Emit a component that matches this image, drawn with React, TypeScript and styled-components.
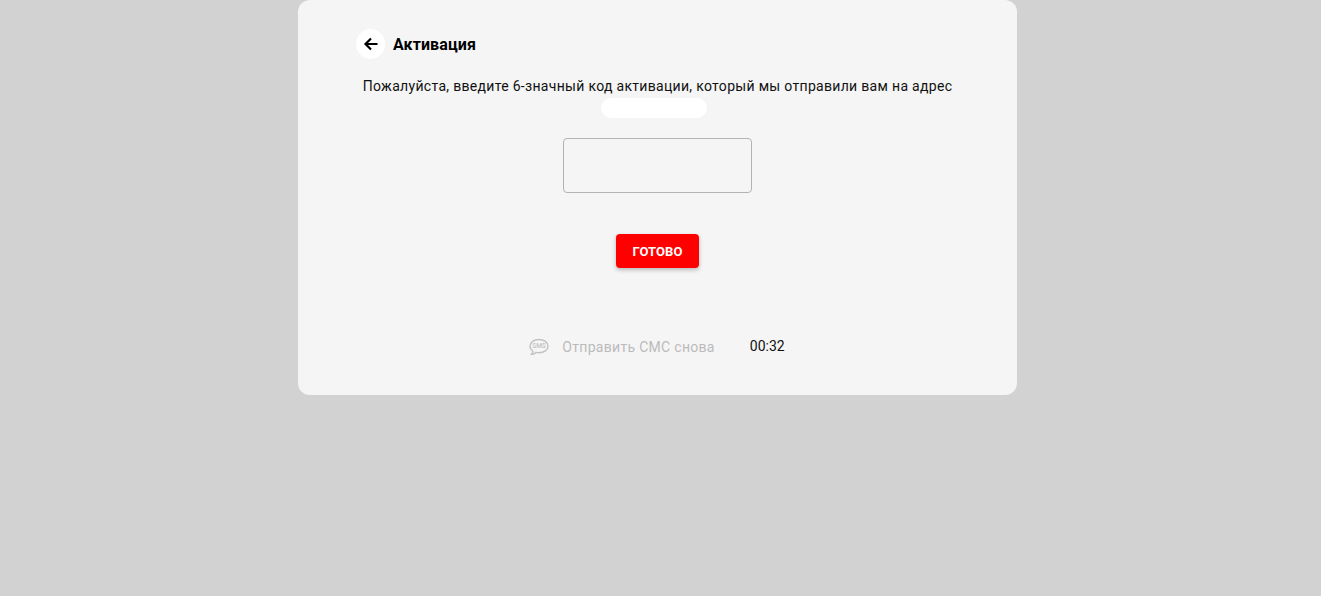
import { createGlobalStyle } from 'styled-components'
import styled from 'styled-components'

const GlobalStyle = createGlobalStyle`
  html, body {
    margin: 0;
    height: 100%;
    background: #d2d2d2;
    font-family: Roboto, "Liberation Sans", sans-serif;
  }
`

const Page = styled.div`
  display: flex;
  justify-content: center;
  min-height: 596px;
  padding-right: 6px;
  box-sizing: border-box;
`

const Card = styled.main`
  width: 719px;
  height: 395px;
  box-sizing: border-box;
  padding: 29px 58px 0;
  display: flex;
  flex-direction: column;
  align-items: center;
  background: #f5f5f5;
  border-radius: 12px;
`

const Header = styled.div`
  align-self: stretch;
  display: flex;
  align-items: center;
  gap: 8px;
  height: 30px;
`

const BackButton = styled.button`
  width: 29px;
  height: 30px;
  padding: 0;
  border: none;
  border-radius: 50%;
  background: #ffffff;
  display: flex;
  align-items: center;
  justify-content: center;
`

const Title = styled.h1`
  margin: 0;
  font-size: 16px;
  font-weight: 700;
  letter-spacing: 0.1px;
  color: #000;
`

const Message = styled.p`
  margin: 18px 0 0;
  height: 18px;
  line-height: 18px;
  font-size: 14px;
  letter-spacing: 0.31px;
  color: #111;
  white-space: nowrap;
`

const Redacted = styled.div`
  width: 106px;
  height: 20px;
  margin: 3px 7px 0 0;
  border-radius: 10px;
  background: #ffffff;
`

const CodeInput = styled.input`
  width: 189px;
  height: 55px;
  margin-top: 20px;
  box-sizing: border-box;
  background: transparent;
  border: 1px solid #b3b3b3;
  border-radius: 4px;
  outline: none;
`

const SubmitButton = styled.button`
  width: 83px;
  height: 34px;
  margin-top: 41px;
  padding: 0;
  border: none;
  border-radius: 4px;
  background: #ff0000;
  color: #fff;
  font-family: inherit;
  font-size: 13px;
  font-weight: 700;
  letter-spacing: 0.1px;
  text-transform: uppercase;
  box-shadow: 0 2px 4px rgba(0, 0, 0, 0.25);
`

const ResendRow = styled.div`
  display: flex;
  align-items: center;
  height: 20px;
  margin: 69px 1px 0 0;
  font-size: 14px;
`

const ResendText = styled.span`
  margin-left: 13px;
  color: #bbbbbb;
  letter-spacing: 0.3px;
`

const Timer = styled.span`
  margin-left: 35px;
  margin-top: -2px;
  color: #111;
`

const SmsIcon = () => (
  <svg width="20" height="18" viewBox="0 0 20 18" fill="none">
    <path
      d="M10 1.5C15 1.5 19 4.4 19 8.2C19 12 15 14.8 10 14.8C8.9 14.8 7.9 14.7 7 14.4C5.9 15.5 4.2 16.4 2.4 16.4C3.4 15.3 3.9 14.1 3.9 13.1C2.1 11.9 1 10.2 1 8.2C1 4.4 5 1.5 10 1.5Z"
      stroke="#c2c2c2"
      strokeWidth="1.4"
    />
    <text
      x="10"
      y="10.4"
      textAnchor="middle"
      fontFamily="Roboto, sans-serif"
      fontSize="6.5"
      fontWeight="500"
      fill="#c2c2c2"
    >
      SMS
    </text>
  </svg>
)

export default function App() {
  return (
    <Page>
      <GlobalStyle />
      <Card>
        <Header>
          <BackButton aria-label="Назад">
            <svg width="16" height="16" viewBox="0 0 16 16" fill="none">
              <path d="M14.5 8H2.5M8 2.5L2.5 8L8 13.5" stroke="#000" strokeWidth="2.2" />
            </svg>
          </BackButton>
          <Title>Активация</Title>
        </Header>
        <Message>Пожалуйста, введите 6-значный код активации, который мы отправили вам на адрес</Message>
        <Redacted />
        <CodeInput />
        <SubmitButton>Готово</SubmitButton>
        <ResendRow>
          <SmsIcon />
          <ResendText>Отправить СМС снова</ResendText>
          <Timer>00:32</Timer>
        </ResendRow>
      </Card>
    </Page>
  )
}
